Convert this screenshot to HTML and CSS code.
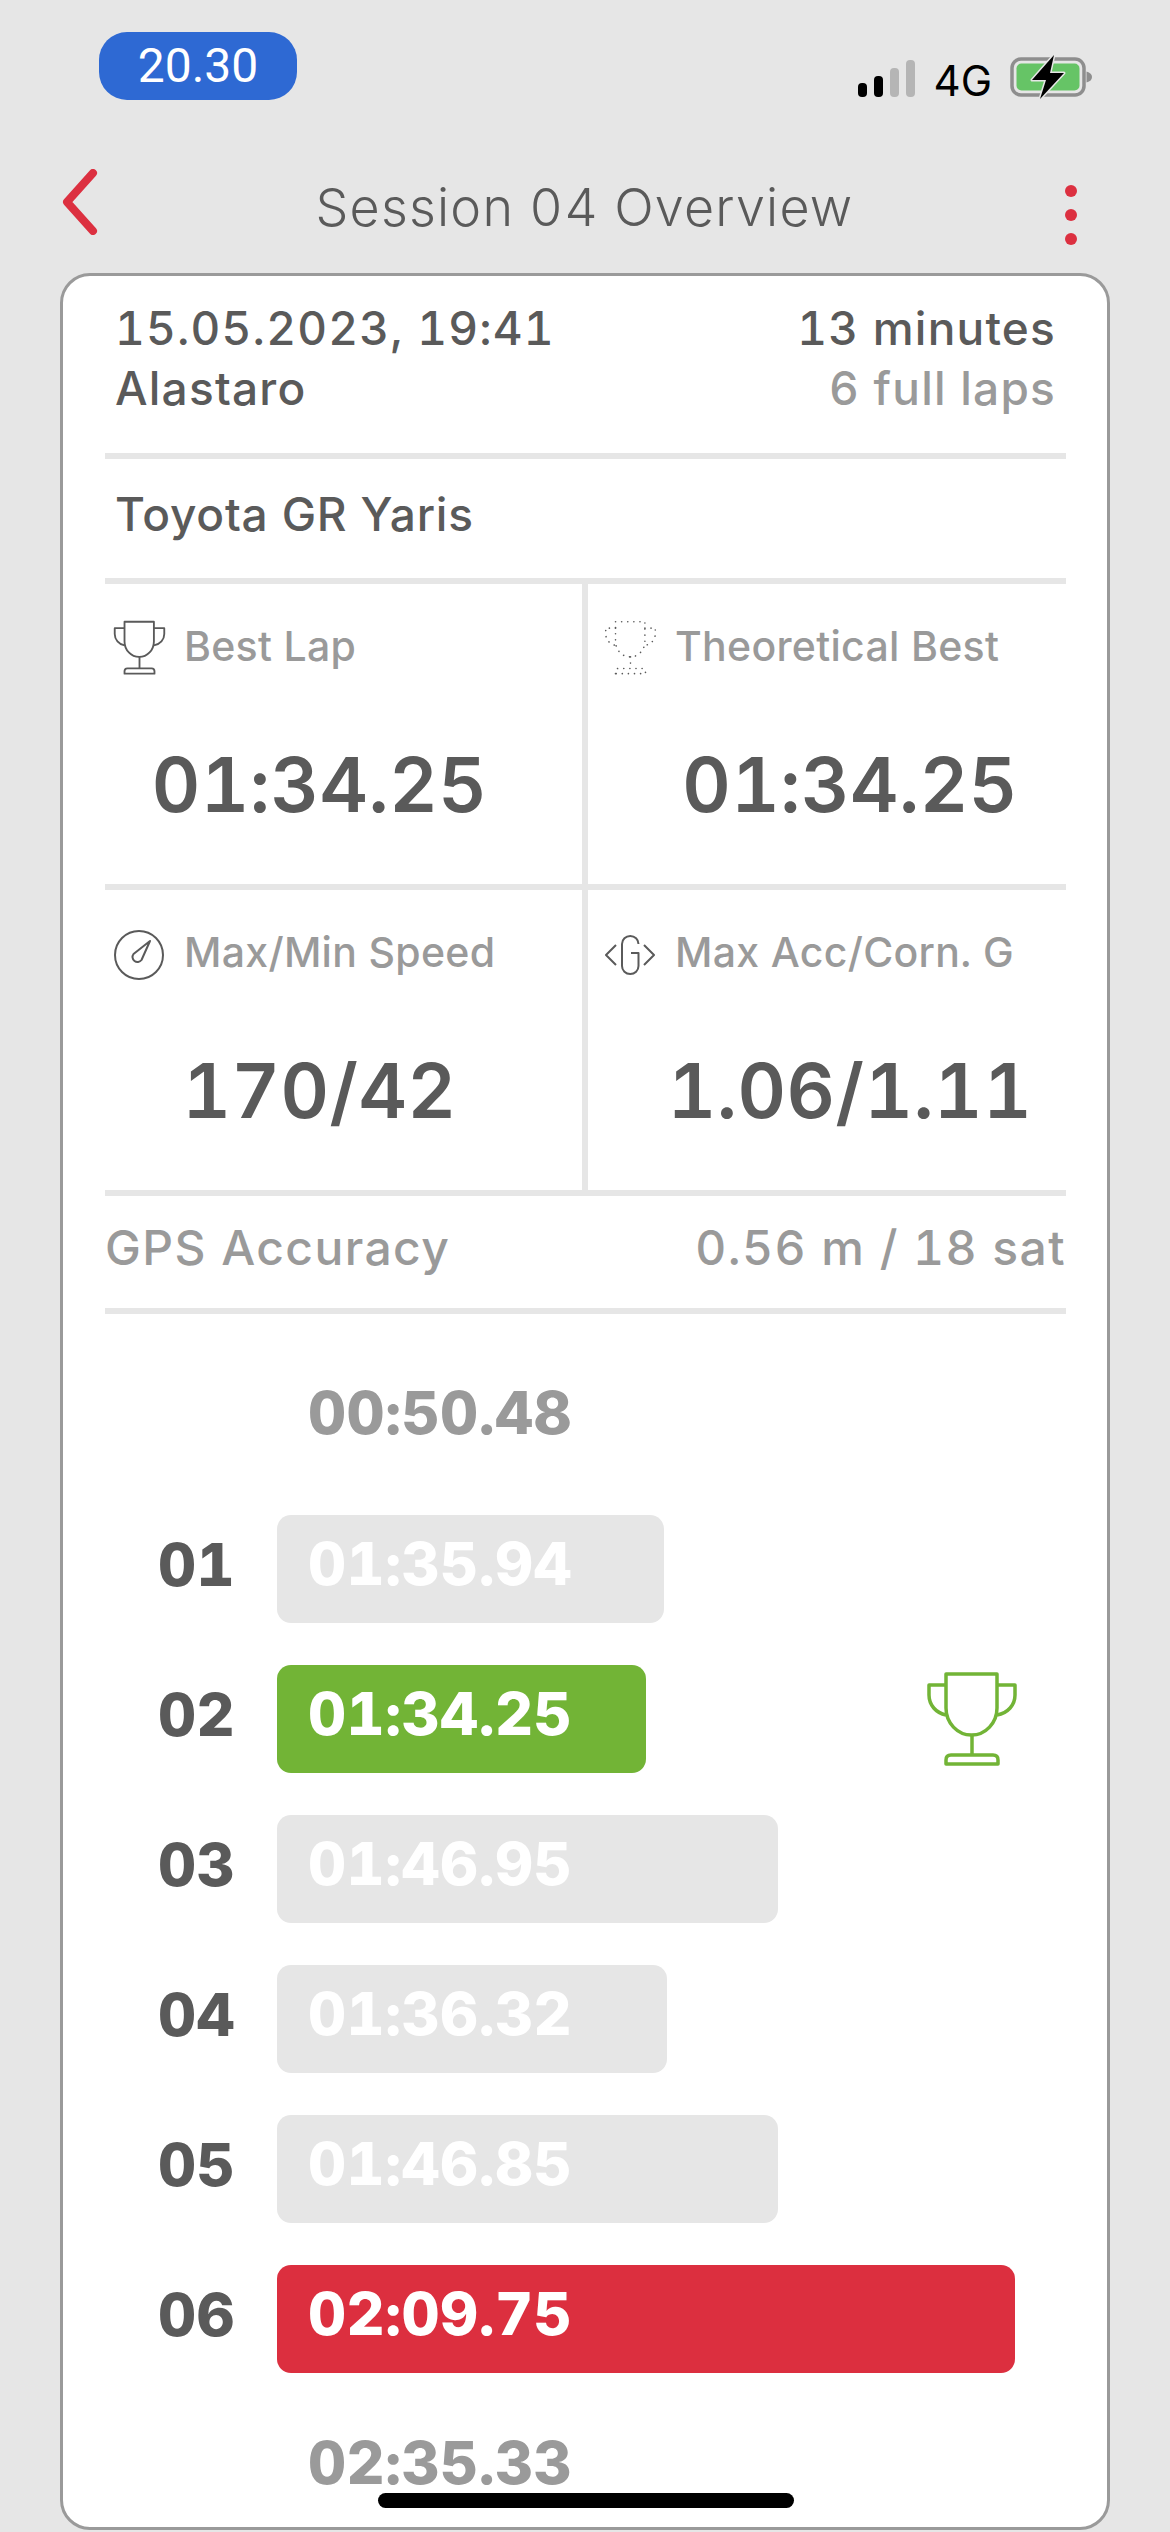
FILE: index.html
```html
<!DOCTYPE html>
<html lang="en">

<head>
    <meta charset="UTF-8">
    <meta name="viewport" content="width=device-width, initial-scale=1.0">
    <title>Session 04 Overview</title>
    <link rel="stylesheet" href="styles.css">
</head>

<body>
    <svg class="defs" width="0" height="0">
        <symbol id="trophy" viewBox="-2 -2 92 97">
            <path d="M18 1H69V35A25.5 27 0 0 1 18 35Z" />
            <path d="M18 12H1V22C1 32 8 40 18 42" />
            <path d="M69 12H87V22C87 32 80 40 69 42" />
            <path d="M44 62V82" />
            <path d="M18 91V87Q18 82 23 82H65Q70 82 70 87V91Z" />
        </symbol>
    </svg>

    <div class="status-bar">
        <span class="clock">20.30</span>
        <div class="status-icons">
            <div class="signal">
                <i class="on s1"></i>
                <i class="on s2"></i>
                <i class="s3"></i>
                <i class="s4"></i>
            </div>
            <span class="network">4G</span>
            <svg class="battery" width="84" height="48" viewBox="0 0 84 48">
                <rect x="2" y="6" width="72" height="36" rx="9" fill="none" stroke="#8e8e8e" stroke-width="3.5" />
                <rect x="6.5" y="10.5" width="63" height="27" rx="5" fill="#66c466" />
                <path d="M76.500 18.500Q82 20 82 24Q82 28 76.500 29.500Z" fill="#8e8e8e" />
                <path d="M44 2L22 27H36L30 46L54 20H40Z" fill="#000" stroke="#e6e6e6" stroke-width="3" stroke-linejoin="round" paint-order="stroke" />
            </svg>
        </div>
    </div>

    <header class="nav">
        <svg class="back" width="36" height="66" viewBox="0 0 36 66">
            <path d="M31 4L5 33L31 62" fill="none" stroke="#dc3040" stroke-width="8" stroke-linecap="round" stroke-linejoin="round" />
        </svg>
        <h1>Session 04 Overview</h1>
        <div class="more">
            <i></i>
            <i></i>
            <i></i>
        </div>
    </header>

    <main class="card">
        <section class="info">
            <div class="info-row">
                <span>15.05.2023, 19:41</span>
                <span>13 minutes</span>
            </div>
            <div class="info-row">
                <span>Alastaro</span>
                <span class="muted">6 full laps</span>
            </div>
        </section>

        <section class="car">Toyota GR Yaris</section>

        <section class="stats">
            <div class="stat">
                <div class="stat-label">
                    <svg class="stat-icon cup line-icon"><use href="#trophy" /></svg>
                    Best Lap
                </div>
                <div class="stat-value">01:34.25</div>
            </div>
            <div class="stat">
                <div class="stat-label">
                    <svg class="stat-icon cup line-icon dotted"><use href="#trophy" /></svg>
                    Theoretical Best
                </div>
                <div class="stat-value">01:34.25</div>
            </div>
            <div class="stat">
                <div class="stat-label">
                    <svg class="stat-icon round line-icon" viewBox="0 0 50 50">
                        <circle cx="25" cy="25" r="24" />
                        <path d="M36 11L19.500 24A5 5 0 1 0 27.500 30Z" />
                    </svg>
                    Max/Min Speed
                </div>
                <div class="stat-value">170/42</div>
            </div>
            <div class="stat">
                <div class="stat-label">
                    <svg class="stat-icon round line-icon" viewBox="0 0 50 40">
                        <path d="M11 10L1 20L11 30" />
                        <path d="M39 10L49 20L39 30" />
                        <path d="M33.500 9A8.200 8 0 0 0 17 9V31A8.200 8 0 0 0 33.500 31V18H26" />
                    </svg>
                    Max Acc/Corn. G
                </div>
                <div class="stat-value">1.06/1.11</div>
            </div>
        </section>

        <section class="gps">
            <span>GPS Accuracy</span>
            <span>0.56 m / 18 sat</span>
        </section>

        <section class="laps">
            <div class="lap">
                <span class="lap-no"></span>
                <span class="lap-plain">00:50.48</span>
            </div>
            <div class="lap">
                <span class="lap-no">01</span>
                <span class="lap-bar" style="width: 387px">01:35.94</span>
            </div>
            <div class="lap">
                <span class="lap-no">02</span>
                <span class="lap-bar best" style="width: 369px">01:34.25</span>
                <svg class="lap-trophy"><use href="#trophy" /></svg>
            </div>
            <div class="lap">
                <span class="lap-no">03</span>
                <span class="lap-bar" style="width: 501px">01:46.95</span>
            </div>
            <div class="lap">
                <span class="lap-no">04</span>
                <span class="lap-bar" style="width: 390px">01:36.32</span>
            </div>
            <div class="lap">
                <span class="lap-no">05</span>
                <span class="lap-bar" style="width: 501px">01:46.85</span>
            </div>
            <div class="lap">
                <span class="lap-no">06</span>
                <span class="lap-bar worst" style="width: 738px">02:09.75</span>
            </div>
            <div class="lap">
                <span class="lap-no"></span>
                <span class="lap-plain">02:35.33</span>
            </div>
        </section>
    </main>

    <div class="home-indicator"></div>
</body>

</html>
```

FILE: styles.css
```css
* {
    box-sizing: border-box;
}

html,
body {
    height: 100%;
}

body {
    margin: 0;
    padding: 0;
    background-color: #e6e6e6;
    color: #5a5a5a;
    font-family: 'Inter', 'Noto Sans', sans-serif;
    font-variant-numeric: tabular-nums;
    overflow: hidden;
    position: relative;
}

.defs {
    display: block;
    height: 0;
}

.status-bar {
    height: 140px;
    padding: 32px 76px 0 99px;
    display: flex;
    justify-content: space-between;
    align-items: flex-start;
}

.clock {
    width: 198px;
    height: 68px;
    border-radius: 28px;
    background-color: #2e69d3;
    color: #fff;
    font-family: 'Roboto', sans-serif;
    font-size: 48px;
    line-height: 68px;
    text-align: center;
}

.status-icons {
    display: flex;
    align-items: flex-end;
    margin-top: 21px;
}

.signal {
    display: flex;
    align-items: flex-end;
    gap: 7px;
    margin-bottom: 4px;
}

.signal i {
    width: 9px;
    border-radius: 4px;
    background-color: #b5b5b5;
}

.signal i.on {
    background-color: #000;
}

.s1 {
    height: 14px;
}

.s2 {
    height: 21px;
}

.s3 {
    height: 29px;
}

.s4 {
    height: 37px;
}

.network {
    margin-left: 18px;
    color: #000;
    font-size: 42px;
    line-height: 40px;
}

.battery {
    margin-left: 18px;
}

.nav {
    height: 133px;
    padding: 29px 93px 0 62px;
    display: flex;
    align-items: flex-start;
    justify-content: space-between;
}

.back {
    display: block;
}

.nav h1 {
    margin: 7px 0 0 6px;
    font-size: 52px;
    font-weight: 300;
    line-height: 64px;
    letter-spacing: 1.2px;
}

.more {
    width: 12px;
    margin-top: 16px;
    display: flex;
    flex-direction: column;
    gap: 12px;
}

.more i {
    height: 12px;
    border-radius: 50%;
    background-color: #dc3040;
}

.card {
    margin-left: 60px;
    width: 1050px;
    height: 2257px;
    padding: 0 41px 0 42px;
    background-color: #fff;
    border: 3px solid #9a9a9a;
    border-radius: 30px;
    overflow: hidden;
}

.info {
    height: 183px;
    padding: 22px 10px 0;
    border-bottom: 6px solid #e6e6e6;
    font-size: 46px;
    font-weight: 500;
    line-height: 60px;
    letter-spacing: 1.2px;
}

.info-row {
    display: flex;
    justify-content: space-between;
}

.muted {
    color: #9a9a9a;
}

.car {
    height: 125px;
    padding: 0 10px;
    border-bottom: 6px solid #e6e6e6;
    font-size: 46px;
    font-weight: 500;
    line-height: 110px;
    letter-spacing: 0.8px;
}

.stats {
    display: grid;
    grid-template-columns: 483px 1fr;
}

.stat {
    height: 306px;
    padding-top: 36px;
    border-bottom: 6px solid #e6e6e6;
}

.stat:nth-child(odd) {
    border-right: 6px solid #e6e6e6;
    padding-left: 9px;
}

.stat:nth-child(even) {
    padding-left: 17px;
}

.stat:nth-child(odd) .stat-value {
    padding-right: 57px;
}

.stat:nth-child(even) .stat-value {
    padding-left: 29px;
}

.stat-label {
    display: flex;
    align-items: center;
    gap: 20px;
    height: 52px;
    color: #9a9a9a;
    font-size: 41px;
    font-weight: 500;
    letter-spacing: 0.3px;
}

.stat-icon {
    width: 50px;
    height: 52px;
    flex: none;
}

.stat-icon.cup {
    width: 53px;
    height: 56px;
    margin: 4px -2px 0 -1px;
}

.stat-icon.round {
    margin-top: 6px;
}

.line-icon {
    fill: none;
    stroke: #5a5a5a;
    stroke-width: 2;
    stroke-linejoin: round;
}

.line-icon.cup {
    stroke-width: 3.200;
}

.line-icon.dotted {
    stroke-width: 2.800;
    stroke-linecap: round;
    stroke-dasharray: 0.100 10.500;
}

.stat-value {
    margin-top: 60px;
    text-align: center;
    font-size: 75px;
    font-weight: 600;
    line-height: 106px;
    letter-spacing: 0.5px;
}

.gps {
    height: 118px;
    padding-bottom: 10px;
    display: flex;
    justify-content: space-between;
    align-items: center;
    border-bottom: 6px solid #e6e6e6;
    color: #9a9a9a;
    font-size: 48px;
    font-weight: 500;
    letter-spacing: 1.4px;
}

.laps {
    padding: 51px 48px 0 0;
    display: flex;
    flex-direction: column;
    gap: 42px;
}

.lap {
    height: 108px;
    display: flex;
    align-items: center;
    font-size: 59px;
    font-weight: 800;
    letter-spacing: 0.5px;
}

.lap-no {
    width: 172px;
    padding-left: 53px;
    margin-bottom: 10px;
    flex: none;
}

.lap-plain {
    padding-left: 31px;
    margin-bottom: 13px;
    color: #9a9a9a;
}

.lap-bar {
    height: 108px;
    padding: 0 0 10px 31px;
    border-radius: 14px;
    background-color: #e6e6e6;
    color: #fff;
    line-height: 98px;
}

.lap-bar.best {
    background-color: #72b436;
}

.lap-bar.worst {
    background-color: #dc2f3f;
}

.lap-trophy {
    width: 92px;
    height: 97px;
    margin-left: auto;
    fill: none;
    stroke: #72b436;
    stroke-width: 3.500;
    stroke-linejoin: round;
}

.home-indicator {
    position: absolute;
    left: 378px;
    top: 2493px;
    width: 416px;
    height: 15px;
    border-radius: 8px;
    background-color: #000;
}
```
